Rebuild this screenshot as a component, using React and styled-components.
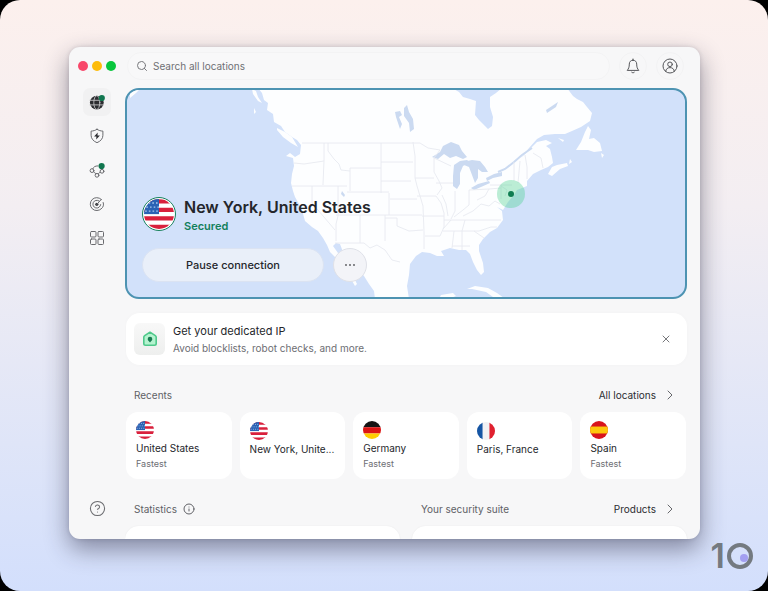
import React from "react";
import styled, { createGlobalStyle } from "styled-components";
import { Search, X, ChevronRight, Info, CircleHelp } from "lucide-react";

const GlobalStyle = createGlobalStyle`
  * {
    box-sizing: border-box;
  }

  body {
    margin: 0;
    background: #000;
    color: #24262b;
    font-family: Inter, "Liberation Sans", sans-serif;
  }

  button {
    padding: 0;
    border: none;
    background: transparent;
    color: inherit;
    font: inherit;
    cursor: pointer;
  }
`;

const Stage = styled.div`
  position: relative;
  display: flex;
  height: 100vh;
  padding: 47px 68px 52px 69px;
  border-radius: 20px;
  background: linear-gradient(180deg, #fcf0ed 0%, #f3eef2 35%, #dfe5f8 75%, #d3dffc 100%);
`;

const Window = styled.div`
  flex: 1;
  min-width: 0;
  display: grid;
  grid-template-columns: 56px minmax(0, 1fr);
  grid-template-rows: auto minmax(0, 1fr);
  border-radius: 11px;
  background: #f7f7f8;
  overflow: hidden;
  box-shadow: 0 10px 24px rgba(40, 38, 60, 0.48), 0 0 4px rgba(40, 38, 60, 0.16);
`;

const TopBar = styled.header`
  grid-column: 1 / -1;
  display: flex;
  align-items: center;
  gap: 9px;
  height: 41px;
  padding: 0 16px 3px 9px;
`;

const Lights = styled.div`
  display: flex;
  gap: 4px;
  margin-right: 2px;
`;

const Light = styled.span`
  width: 10px;
  height: 10px;
  border-radius: 50%;
  background: ${({ color }) => color};
`;

const SearchBox = styled.label`
  flex: 1;
  display: flex;
  align-items: center;
  gap: 5px;
  height: 28px;
  padding: 0 8px;
  border: 1px solid #f3f3f4;
  border-radius: 14px;
  background: #f8f8f9;
  color: #77787c;
`;

const SearchInput = styled.input`
  flex: 1;
  min-width: 0;
  padding: 0;
  border: none;
  outline: none;
  background: transparent;
  color: #55565a;
  font: 400 10px Inter, sans-serif;

  &::placeholder {
    color: #6f7074;
    opacity: 1;
  }
`;

const RoundButton = styled.button`
  display: grid;
  place-items: center;
  width: 28px;
  height: 28px;
  border: 1px solid #f2f2f3;
  border-radius: 50%;
  color: #55565a;
`;

const Sidebar = styled.nav`
  display: flex;
  flex-direction: column;
  align-items: center;
  gap: 6px;
  padding-bottom: 17px;
`;

const SideButton = styled.button`
  display: grid;
  place-items: center;
  width: 28px;
  height: 28px;
  border-radius: 7px;
  background: ${({ $active }) => ($active ? "#f1f1f2" : "transparent")};
  color: #6a6b6f;

  &:last-child {
    margin-top: auto;
  }
`;

const Main = styled.main`
  padding-right: 13px;
  overflow: hidden;
`;

const MapCard = styled.section`
  position: relative;
  display: flex;
  flex-direction: column;
  justify-content: flex-end;
  height: 211px;
  padding: 15px;
  border: 2px solid #4d93b2;
  border-radius: 14px;
  background: #d2e1fa;
  overflow: hidden;
`;

const MapArt = styled.svg`
  position: absolute;
  inset: 0;
  width: 100%;
  height: 100%;
`;

const Place = styled.div`
  position: relative;
  display: flex;
  align-items: center;
  gap: 8px;
  margin-bottom: 13px;
`;

const PlaceFlag = styled.span`
  display: grid;
  place-items: center;
  width: 34px;
  height: 34px;
  border: 1px solid #17805c;
  border-radius: 50%;
  background: #fff;
`;

const PlaceText = styled.div`
  padding-top: 4px;
`;

const PlaceName = styled.h1`
  margin: 0;
  font-size: 16px;
  line-height: 20px;
  font-weight: 600;
`;

const PlaceStatus = styled.p`
  margin: 0;
  color: #12805b;
  font-size: 11px;
  line-height: 18px;
  font-weight: 600;
`;

const Actions = styled.div`
  position: relative;
  display: flex;
  gap: 9px;
`;

const PauseButton = styled.button`
  width: 182px;
  height: 34px;
  border: 1px solid #dbe3f2;
  border-radius: 17px;
  background: #e9eff9;
  font-size: 11px;
  font-weight: 500;
`;

const MoreButton = styled.button`
  display: grid;
  place-items: center;
  width: 34px;
  height: 34px;
  border: 1px solid #dfe1e8;
  border-radius: 50%;
  background: #f3f4f8;
`;

const Notice = styled.section`
  display: flex;
  align-items: center;
  gap: 8px;
  margin: 14px 0 20px 1px;
  padding: 9px 13px 9px 8px;
  border-radius: 14px;
  background: #fff;
  box-shadow: 0 0 5px rgba(0, 0, 0, 0.02);
`;

const NoticeIcon = styled.span`
  display: grid;
  place-items: center;
  width: 31px;
  height: 32px;
  border-radius: 6px;
  background: linear-gradient(#f8f8f8, #eeefee);
`;

const NoticeBody = styled.div`
  flex: 1;
`;

const NoticeTitle = styled.h2`
  margin: 0;
  font-size: 11px;
  line-height: 18px;
  font-weight: 400;
`;

const NoticeText = styled.p`
  margin: 0;
  color: #6d6e73;
  font-size: 10px;
  line-height: 16px;
`;

const CloseButton = styled.button`
  display: grid;
  place-items: center;
  width: 16px;
  height: 16px;
  color: #77787c;
`;

const SectionHead = styled.div`
  display: flex;
  align-items: center;
  justify-content: space-between;
  height: 20px;
  padding: 0 9px;
`;

const SectionTitle = styled.h2`
  display: flex;
  align-items: center;
  gap: 6px;
  margin: 0;
  color: #606166;
  font-size: 10px;
  font-weight: 400;
`;

const MoreLink = styled.a`
  display: flex;
  align-items: center;
  gap: 6px;
  color: #2b2c30;
  font-size: 10px;
  text-decoration: none;

  svg {
    color: #66676b;
  }
`;

const Recents = styled.div`
  display: grid;
  grid-template-columns: repeat(5, minmax(0, 1fr));
  gap: 8px;
  margin: 7px 1px 20px;
`;

const RecentCard = styled.button`
  display: flex;
  flex-direction: column;
  align-items: flex-start;
  justify-content: flex-start;
  height: 67px;
  padding: ${({ $single }) => ($single ? "10px" : "9px")} 10px 0;
  border-radius: 12px;
  background: #fff;
  text-align: left;
`;

const RecentName = styled.span`
  font-size: 10px;
  line-height: 18px;
  white-space: nowrap;
`;

const RecentNote = styled.span`
  color: #6d6e73;
  font-size: 9px;
  line-height: 13px;
`;

const Panels = styled.div`
  display: grid;
  grid-template-columns: repeat(2, minmax(0, 1fr));
  gap: 12px;
`;

const Panel = styled.div`
  height: 60px;
  margin-top: 7px;
  border-radius: 14px;
  background: #fff;
  box-shadow: 0 0 2px rgba(0, 0, 0, 0.06);
`;

const Brand = styled.div`
  position: absolute;
  right: 15px;
  bottom: 22px;
  display: flex;
  align-items: center;
  gap: 2px;
  color: #747a80;
  font: 600 34px/26px Inter, sans-serif;
`;

const BrandRing = styled.span`
  position: relative;
  width: 26px;
  height: 26px;
  border: 4px solid #747a80;
  border-radius: 50%;

  &::after {
    content: "";
    position: absolute;
    right: 1px;
    bottom: 3px;
    width: 8px;
    height: 8px;
    border-radius: 50%;
    background: #a39ff0;
  }
`;

const flags = {
  us: (
    <>
      <rect width="26" height="26" fill="#fff" />
      <path d="M0 2h26M0 9.4h26M0 16.8h26M0 24.2h26" stroke="#d9203c" strokeWidth="3.7" />
      <rect width="13" height="13.1" fill="#2a62b4" />
      <path
        d="M4 3.5h9M2 7h11M1 10.5h12"
        stroke="#a9c8ee"
        strokeWidth="1.2"
        strokeDasharray="1.4 1.8"
      />
    </>
  ),
  de: (
    <>
      <rect width="26" height="9" fill="#141414" />
      <rect y="9" width="26" height="9" fill="#dc1414" />
      <rect y="18" width="26" height="8" fill="#fc0" />
    </>
  ),
  fr: (
    <>
      <rect width="26" height="26" fill="#f1f1f4" />
      <rect width="8" height="26" fill="#1555a4" />
      <rect x="18" width="8" height="26" fill="#e0202f" />
    </>
  ),
  es: (
    <>
      <rect width="26" height="26" fill="#d8141c" />
      <rect y="8" width="26" height="10" fill="#fdc70c" />
    </>
  ),
};

const Flag = ({ code, size, id }) => (
  <svg width={size} height={size} viewBox="0 0 26 26" aria-hidden="true">
    <clipPath id={id}>
      <circle cx="13" cy="13" r="13" />
    </clipPath>
    <g clipPath={`url(#${id})`}>{flags[code]}</g>
  </svg>
);

const Icon = ({ size = 16, children }) => (
  <svg
    width={size}
    height={size}
    viewBox="0 0 16 16"
    fill="none"
    stroke="currentColor"
    strokeWidth="1"
    strokeLinecap="round"
    strokeLinejoin="round"
    aria-hidden="true"
  >
    {children}
  </svg>
);

const GlobeIcon = () => (
  <Icon>
    <circle cx="7.8" cy="8.6" r="6.9" fill="#2b2c30" stroke="none" />
    <path d="M1 6.300h13.500M1 10.900h13.500" stroke="#c4c4c6" strokeWidth="0.900" />
    <ellipse cx="7.8" cy="8.600" rx="3" ry="6.900" stroke="#c4c4c6" strokeWidth="0.900" />
    <circle cx="12.800" cy="4" r="3.100" fill="#10764f" stroke="none" />
  </Icon>
);

const ShieldIcon = () => (
  <Icon>
    <path d="M8 1.300c1.800 1.200 3.700 1.700 5.900 1.800v4.200c0 3.400-2.300 5.900-5.900 7.400-3.600-1.500-5.900-4-5.900-7.400V3.100C4.300 3 6.200 2.500 8 1.300z" />
    <path d="M8.700 4.600L5.100 8.500h2.300l-.2 3.100 3.700-4.100H8.500z" fill="#2b2c30" stroke="none" />
  </Icon>
);

const MeshIcon = () => (
  <Icon>
    <circle cx="3" cy="8.600" r="1.900" />
    <circle cx="8" cy="13.300" r="1.900" />
    <circle cx="13" cy="9.300" r="1.900" />
    <path d="M3.800 6.800C4.500 5 6 3.800 8.800 3.900M4.600 9.800c1 .300 1.700 1 2 2.100M9.400 11.900c.300-.9.900-1.500 2-1.700M12.800 7.400V6.500" />
    <circle cx="12.600" cy="4" r="3.100" fill="#10764f" stroke="none" />
  </Icon>
);

const RadarIcon = () => (
  <Icon>
    <path d="M12.300 3.400A6.500 6.500 0 1 0 12.500 12.600M14.200 6.500c.8 2.400.2 4.500-1.700 6.100M10 4.900A3.900 3.900 0 1 0 11.700 8.600" />
    <circle cx="7.800" cy="8.300" r="1.600" fill="#3b3c40" stroke="none" />
    <path d="M8 8.200l4.300-4.800" />
  </Icon>
);

const GridIcon = () => (
  <Icon>
    <rect x="1.500" y="1.500" width="5.500" height="5.500" rx="1" />
    <rect x="9" y="1.500" width="5.500" height="5.500" rx="1" />
    <rect x="1.500" y="9" width="5.500" height="5.500" rx="1" />
    <rect x="9" y="9" width="5.500" height="5.500" rx="1" />
  </Icon>
);

const BellIcon = () => (
  <Icon>
    <path d="M8 1v1.200M8 2.200c-2.300 0-3.700 1.600-3.700 3.900 0 3-.7 4.700-2.100 6.300h11.600c-1.400-1.600-2.100-3.300-2.100-6.300 0-2.300-1.400-3.900-3.700-3.900zM6.700 14.300c.7.700 1.900.7 2.600 0" />
  </Icon>
);

const UserIcon = () => (
  <Icon>
    <circle cx="8" cy="8" r="7" />
    <circle cx="8" cy="6.300" r="2.300" />
    <path d="M3.700 13.300c.3-2.400 1.900-3.700 4.300-3.700s4 1.300 4.300 3.700" />
  </Icon>
);

const HouseIcon = () => (
  <Icon>
    <path
      d="M8 1.200l5.300 3.500c.6.400.9.900.9 1.600v6.200c0 1-.7 1.700-1.700 1.700h-9c-1 0-1.700-.7-1.700-1.700V6.300c0-.7.300-1.200.9-1.600z"
      fill="#b4f3cf"
      stroke="#4fc98b"
      strokeWidth="1.600"
    />
    <path
      d="M8 5.800a2.300 2.300 0 0 1 2.300 2.300c0 1.400-1.100 2.300-2.300 3.300-1.200-1-2.300-1.900-2.300-3.300A2.300 2.300 0 0 1 8 5.800z"
      fill="#187a50"
      stroke="none"
    />
  </Icon>
);

const DotsIcon = () => (
  <svg width="12" height="4" viewBox="0 0 12 4" fill="#55565a" aria-hidden="true">
    <circle cx="2" cy="2" r="0.900" />
    <circle cx="6" cy="2" r="0.900" />
    <circle cx="10" cy="2" r="0.900" />
  </svg>
);

const NorthAmerica = () => (
  <MapArt viewBox="2 2 558 207" preserveAspectRatio="xMidYMid slice" aria-hidden="true">
    <g fill="#fdfeff">
      {/* mainland */}
      <path
        d="M133 0L137 5 139 12 143 15 142 22 148 26 149 34 156 38 160 44 167 49 172 52 176 57 175 66
        170 69 165 65 161 68 168 70 169 78 167 86 166 95 168 103 170 109 174 116 177 122 180 133 187 139
        193 143 198 150 202 157 205 164 210 169 214 177 221 186 226 191 230 198 232 196 227 186 222 178
        218 170 213 165 208 158 211 155 215 156 218 164 225 173 232 180 239 188 244 196 249 203 250 211
        L284 211 282 198 284 187 285 176 291 168 297 164 305 165 312 168 319 168 316 163 325 160 334 162
        341 162 345 166 348 174 352 182 356 187 359 184 358 175 354 163 354 157 358 151 365 144 372 140
        378 132 377 123 372 119 378 122 383 114 389 107 392 102 402 98 402 93 408 86 416 82 423 79 428 75
        427 69 425 61 421 58 427 55 421 52 412 54 404 62 396 70 404 60 412 51 419 47 430 46 440 46 447 43
        456 39 465 33 467 25 462 19 458 14 452 11 448 8 442 0
        L377 0 371 5 365 9 365 19 368 29 367 38 363 41 358 36 354 32 350 27 351 13 345 11 338 9 334 4 327 0z"
      />
      {/* west coast islands */}
      <path d="M127 1l4 2 2 6 4 6-4-2-5-7zM129 20l2 4-2 2zM152 40l8 4 7 5 6 10-7-4-8-6-6-7zM5 5l5-3 6-2-5 5-6 5z" />
      {/* newfoundland and nova scotia */}
      <path d="M463 38l3 4-2 9 5-1 6 5 2 8-8 1-6-2-12 0 5-8 4-10zM476 65l3 2-2 3zM423 86l4-7 5-2 10-2 1 3-8 3-8 7zM433 50l6 2-1 2zM445 71l2 3-3 2z" />
      {/* caribbean */}
      <path d="M342 201l8-3 13 2 9 5 7 5-11-1-7-5-14-3zM314 211l2-4 12-2 3 3-8 3zM356 190l3 1M366 190l4 1" />
    </g>
    <g fill="#cbdaf1">
      {/* great lakes */}
      <path d="M307 69l8-5 3-6 8-4 8 3 3 6 5 6-4 2-7-3-6 2-6-4-6 5z" />
      <path d="M329 77l6-4 7-1 3 2-7 4-3 7 0 11-3 5-4-3 0-10z" />
      <path d="M338 74l9-2 8 1 5 6 3 5-6 0-4-3 0 9-3 5-3-8-3-8-5-2z" />
      <path d="M346 100l7-4 11-3 1 2-9 4-7 3z" />
      <path d="M361 90l8-4 8-2 0 4-9 2-6 3z" />
      {/* canadian and mountain lakes */}
      <path d="M270 24l5-1 2 4-3 2 3 7-2 5-2-6-2-6zM279 20l3-3 2 7 4 7 1 10-4 3-1-9-5-7z" />
      <path d="M421 22l12-8-2 5-9 6zM217 103l3 4-1 2-3-3z" />
    </g>
    {/* st lawrence */}
    <path d="M407 60l-10 7-8 7-9 7-7 3" fill="none" stroke="#cbdaf1" strokeWidth="2" />
    {/* borders */}
    <g fill="none" stroke="#e8eaf0" strokeWidth="0.900">
      <path d="M177 55h118l8 5 12 2M169 75l10 1 20-3M199 55v17l-1 25M203 55v8l6 8 5 5 2 6 9 1M225 80v23M225 80h31M167 98h55M187 98v17l23 27M213 98v30l-2 8 0 17M222 104h42M256 55v50M256 74h32M256 93h30M264 105v22M211 127h86M235 127v28M260 127v26M210 155h29l6 5 7-3 8 5 7 10 8 2" />
      <path d="M288 54l2 14 0 22 2 8 6 20 1 26 0 17M290 90h19M265 111h27M260 130h12v8l12 5 14-1M292 108l19 0 5 7 3 10 0 14-4 9-15 0M297 128h22M315 62l-6 8 0 14 5 9 3 7-5 7M309 70l17 8M311 95h17M317 107l4 9 2 12M330 103v20l-4 8M344 102v15l-6 5-9 7M344 102l20-1M352 112l8-4 4-7 12-1M365 97h22M376 97v14M319 132h57M326 132l-8 9M318 143h36M329 143l-2 17M340 132l-3 11v19M349 143l10 7M327 158h18M354 143l12-4 6 0M338 128l10-5 8-7 8 2 6-5 5 3M376 98l6 4-2 6M389 74v19M395 73l-2 22M400 67l2 12 0 12M408 65l8 5 2 10" />
    </g>
    <circle cx="386" cy="106" r="14" fill="#46cf8b" fillOpacity="0.360" />
    <circle cx="386" cy="106" r="3" fill="#0f7d52" />
  </MapArt>
);

const recents = [
  { code: "us", name: "United States", note: "Fastest" },
  { code: "us", name: "New York, Unite..." },
  { code: "de", name: "Germany", note: "Fastest" },
  { code: "fr", name: "Paris, France" },
  { code: "es", name: "Spain", note: "Fastest" },
];

const App = () => (
  <>
    <GlobalStyle />
    <Stage>
      <Window>
        <TopBar>
          <Lights>
            <Light color="#f8476a" />
            <Light color="#fdbc0b" />
            <Light color="#08c63d" />
          </Lights>
          <SearchBox>
            <Search size={12} strokeWidth={2} />
            <SearchInput type="text" placeholder="Search all locations" aria-label="Search all locations" />
          </SearchBox>
          <RoundButton aria-label="Notifications">
            <BellIcon />
          </RoundButton>
          <RoundButton aria-label="Account">
            <UserIcon />
          </RoundButton>
        </TopBar>

        <Sidebar>
          <SideButton $active aria-label="VPN">
            <GlobeIcon />
          </SideButton>
          <SideButton aria-label="Threat protection">
            <ShieldIcon />
          </SideButton>
          <SideButton aria-label="Meshnet">
            <MeshIcon />
          </SideButton>
          <SideButton aria-label="Monitor">
            <RadarIcon />
          </SideButton>
          <SideButton aria-label="Products">
            <GridIcon />
          </SideButton>
          <SideButton aria-label="Help">
            <CircleHelp size={17} strokeWidth={1.5} />
          </SideButton>
        </Sidebar>

        <Main>
          <MapCard>
            <NorthAmerica />
            <Place>
              <PlaceFlag>
                <Flag code="us" size={30} id="flag-current" />
              </PlaceFlag>
              <PlaceText>
                <PlaceName>New York, United States</PlaceName>
                <PlaceStatus>Secured</PlaceStatus>
              </PlaceText>
            </Place>
            <Actions>
              <PauseButton>Pause connection</PauseButton>
              <MoreButton aria-label="More options">
                <DotsIcon />
              </MoreButton>
            </Actions>
          </MapCard>

          <Notice>
            <NoticeIcon>
              <HouseIcon />
            </NoticeIcon>
            <NoticeBody>
              <NoticeTitle>Get your dedicated IP</NoticeTitle>
              <NoticeText>Avoid blocklists, robot checks, and more.</NoticeText>
            </NoticeBody>
            <CloseButton aria-label="Dismiss">
              <X size={12} strokeWidth={2} />
            </CloseButton>
          </Notice>

          <SectionHead>
            <SectionTitle>Recents</SectionTitle>
            <MoreLink href="#locations">
              All locations
              <ChevronRight size={16} strokeWidth={1.5} />
            </MoreLink>
          </SectionHead>
          <Recents>
            {recents.map(({ code, name, note }, index) => (
              <RecentCard key={name} $single={!note}>
                <Flag code={code} size={18} id={`flag-${index}`} />
                <RecentName>{name}</RecentName>
                {note && <RecentNote>{note}</RecentNote>}
              </RecentCard>
            ))}
          </Recents>

          <Panels>
            <section>
              <SectionHead>
                <SectionTitle>
                  Statistics
                  <Info size={12} strokeWidth={2} />
                </SectionTitle>
              </SectionHead>
              <Panel />
            </section>
            <section>
              <SectionHead>
                <SectionTitle>Your security suite</SectionTitle>
                <MoreLink href="#products">
                  Products
                  <ChevronRight size={16} strokeWidth={1.5} />
                </MoreLink>
              </SectionHead>
              <Panel />
            </section>
          </Panels>
        </Main>
      </Window>
      <Brand>
        1<BrandRing />
      </Brand>
    </Stage>
  </>
);

export default App;
